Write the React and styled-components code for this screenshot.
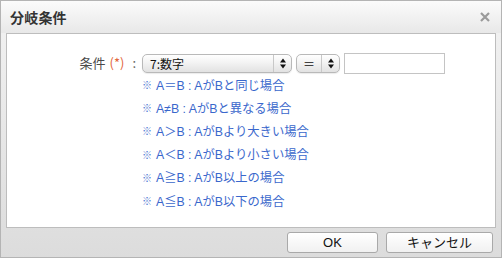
import React from "react";
import styled, { createGlobalStyle } from "styled-components";

const Global = createGlobalStyle`
  html, body { margin: 0; padding: 0; background: #fff; }
  body { font-family: "Liberation Sans", "Noto Sans CJK JP", sans-serif; }
  * { box-sizing: border-box; }
`;

const Dialog = styled.div`
  width: 502px;
  height: 258px;
  border: 1px solid #b4b4b4;
  display: flex;
  flex-direction: column;
  background: linear-gradient(#f3f3f3, #dcdcdc);
`;

const Header = styled.div`
  height: 32px;
  flex: none;
  display: flex;
  align-items: center;
  justify-content: space-between;
  padding: 0 9px 1px 9px;
  background: linear-gradient(#fbfbfb, #e8e8e8);
`;

const Title = styled.div`
  font-family: "Noto Sans CJK JP", sans-serif;
  font-weight: 700;
  font-size: 14px;
  color: #333;
  letter-spacing: 0.2px;
`;

const Close = styled.svg`
  width: 10px;
  height: 10px;
  margin-right: 2px;
`;

const Body = styled.div`
  flex: none;
  padding: 0 5px;
`;

const Panel = styled.div`
  height: 195px;
  background: #fff;
  border: 1px solid #bdbdbd;
  padding-top: 19px;
`;

const FormRow = styled.div`
  display: flex;
  align-items: flex-start;
`;

const Label = styled.div`
  width: 129px;
  text-align: right;
  font-family: "Noto Sans CJK JP", sans-serif;
  font-size: 13px;
  line-height: 19px;
  color: #4a4a4a;
  white-space: nowrap;
`;

const Req = styled.span`
  color: #e2653a;
  margin: 0 4px 0 4px;
`;

const Colon = styled.span`
  color: #666;
  margin-left: 4px;
`;

const Field = styled.div`
  margin-left: 6px;
  display: flex;
  flex-direction: column;
`;

const Controls = styled.div`
  display: flex;
  align-items: center;
  gap: 4px;
`;

const Select = styled.div`
  width: ${(p) => p.$w}px;
  height: 19px;
  border: 1px solid #b9b9b9;
  border-radius: 5px;
  background: linear-gradient(#ffffff, #f3f3f3 45%, #e2e2e2);
  box-shadow: 0 1px 1px rgba(0, 0, 0, 0.08);
  display: flex;
  align-items: stretch;
  font-family: "Noto Sans CJK JP", sans-serif;
  font-size: 12px;
  color: #111;
`;

const SelectText = styled.div`
  flex: 1;
  display: flex;
  align-items: center;
  justify-content: ${(p) => (p.$center ? "center" : "flex-start")};
  padding-left: ${(p) => (p.$center ? 0 : 7)}px;
  line-height: 17px;
`;

const ArrowBox = styled.div`
  width: 18px;
  border-left: 1px solid #c8c8c8;
  display: flex;
  align-items: center;
  justify-content: center;
`;

const TextInput = styled.div`
  width: 101px;
  height: 21px;
  border: 1px solid #c4c4c4;
  background: #fff;
`;

const Notes = styled.div`
  margin-top: -1px;
  display: flex;
  flex-direction: column;
`;

const Note = styled.div`
  height: 23.2px;
  display: flex;
  align-items: center;
  font-family: "Liberation Sans", "Noto Sans CJK JP", sans-serif;
  font-size: 12.3px;
  color: #3a67cc;
  white-space: nowrap;
`;

const Mark = styled.span`
  font-size: 10px;
  color: #5079d2;
  margin-right: 4px;
  font-family: "Noto Sans CJK JP", sans-serif;
`;

const Footer = styled.div`
  flex: 1;
  display: flex;
  justify-content: flex-end;
  align-items: flex-start;
  padding: 4px 8px 0 0;
  gap: 8px;
`;

const Button = styled.button`
  width: ${(p) => p.$w}px;
  height: 21px;
  border: 1px solid #a9a9a9;
  border-radius: 3px;
  background: linear-gradient(#ffffff, #f1f1f1);
  font-family: "Liberation Sans", "Noto Sans CJK JP", sans-serif;
  font-size: 13px;
  color: #111;
  padding: 0;
  line-height: 19px;
`;

const Arrows = () => (
  <svg width="6" height="11" viewBox="0 0 6 11">
    <path d="M3 0.5 L6 4.5 L0 4.5 Z" fill="#111" />
    <path d="M3 10.5 L6 6.5 L0 6.5 Z" fill="#111" />
  </svg>
);

const notes = [
  "A＝B : AがBと同じ場合",
  "A≠B : AがBと異なる場合",
  "A＞B : AがBより大きい場合",
  "A＜B : AがBより小さい場合",
  "A≧B : AがB以上の場合",
  "A≦B : AがB以下の場合",
];

export default function App() {
  return (
    <>
      <Global />
      <Dialog>
        <Header>
          <Title>分岐条件</Title>
          <Close viewBox="0 0 10 10">
            <path d="M1 1 L9 9 M9 1 L1 9" stroke="#9a9a9a" strokeWidth="2.2" />
          </Close>
        </Header>
        <Body>
          <Panel>
            <FormRow>
              <Label>
                条件<Req>(*)</Req>
                <Colon>:</Colon>
              </Label>
              <Field>
                <Controls>
                  <Select $w={150}>
                    <SelectText>7:数字</SelectText>
                    <ArrowBox>
                      <Arrows />
                    </ArrowBox>
                  </Select>
                  <Select $w={44}>
                    <SelectText $center>＝</SelectText>
                    <ArrowBox>
                      <Arrows />
                    </ArrowBox>
                  </Select>
                  <TextInput />
                </Controls>
                <Notes>
                  {notes.map((n) => (
                    <Note key={n}>
                      <Mark>※</Mark>
                      {n}
                    </Note>
                  ))}
                </Notes>
              </Field>
            </FormRow>
          </Panel>
        </Body>
        <Footer>
          <Button $w={91}>OK</Button>
          <Button $w={107}>キャンセル</Button>
        </Footer>
      </Dialog>
    </>
  );
}
